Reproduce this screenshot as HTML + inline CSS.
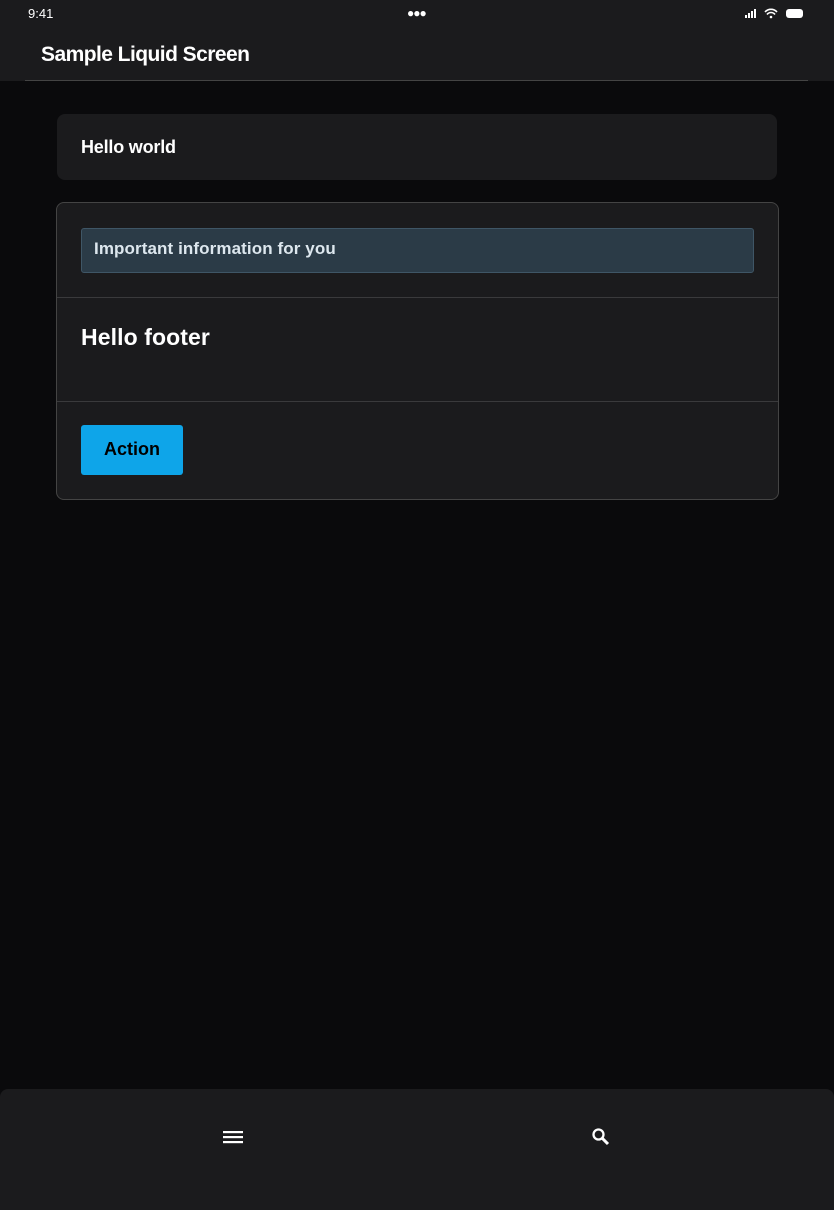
<!DOCTYPE html>
<html><head><style>
*{margin:0;padding:0;box-sizing:border-box}
body{width:834px;height:1210px;background:#0a0a0c;font-family:"Liberation Sans",sans-serif;color:#fff;position:relative;overflow:hidden}
.top{position:absolute;left:0;top:0;width:834px;height:81px;background:#1b1b1d}
.time{position:absolute;left:28px;top:6px;font-size:13px}
.dots{position:absolute;left:407px;top:6px;font-size:12px;letter-spacing:-1px}
.title{position:absolute;left:41px;top:43px;font-size:21px;font-weight:bold;letter-spacing:-0.55px}
.line{position:absolute;left:25px;top:80px;width:783px;height:1px;background:#444}
.c1{position:absolute;left:57px;top:114px;width:720px;height:66px;background:#1b1b1d;border-radius:8px}
.c1 span{position:absolute;left:24px;top:23px;font-size:18px;font-weight:bold;letter-spacing:-0.2px}
.c2{position:absolute;left:56px;top:202px;width:723px;height:298px;background:#1b1b1d;border:1px solid #444;border-radius:8px}
.info{position:absolute;left:24px;top:25px;width:673px;height:45px;background:#2b3b47;border:1px solid #3f5666;border-radius:3px;font-size:17px;font-weight:bold;color:#dde7ee;padding:10px 12px;letter-spacing:0.1px}
.h1{position:absolute;left:0;top:94px;width:721px;height:1px;background:#3a3a3c}
.h2{position:absolute;left:0;top:198px;width:721px;height:1px;background:#3a3a3c}
.foot{position:absolute;left:24px;top:121px;font-size:23px;font-weight:bold;letter-spacing:0.1px}
.btn{position:absolute;left:24px;top:222px;width:102px;height:50px;background:#0ea5e9;border-radius:3px;color:#000;font-size:18px;font-weight:bold;text-align:center;line-height:48px}
.bot{position:absolute;left:0;top:1089px;width:834px;height:121px;background:#1b1b1d;border-radius:8px 8px 0 0}
</style></head><body>
<div class="top"><div class="time">9:41</div><div class="dots">●●●</div>
<svg style="position:absolute;left:745px;top:8px" width="60" height="12"><rect x="0" y="7" width="2" height="3" fill="#fff"/><rect x="3" y="5" width="2" height="5" fill="#fff"/><rect x="6" y="3" width="2" height="7" fill="#fff"/><rect x="9" y="1" width="2" height="9" fill="#fff"/><path d="M20 4a8 8 0 0 1 12 0M22 6.5a5 5 0 0 1 8 0" stroke="#fff" stroke-width="1.6" fill="none"/><circle cx="26" cy="9" r="1.3" fill="#fff"/><rect x="41" y="1" width="17" height="9" rx="3" fill="#fff"/></svg>
<div class="title">Sample Liquid Screen</div></div>
<div class="line"></div>
<div class="c1"><span>Hello world</span></div>
<div class="c2"><div class="info">Important information for you</div><div class="h1"></div><div class="foot">Hello footer</div><div class="h2"></div><div class="btn">Action</div></div>
<div class="bot">
<svg style="position:absolute;left:223px;top:41px" width="20" height="14"><rect x="0" y="1" width="20" height="2.2" fill="#fff"/><rect x="0" y="6" width="20" height="2.2" fill="#fff"/><rect x="0" y="11" width="20" height="2.2" fill="#fff"/></svg>
<svg style="position:absolute;left:591px;top:38px" width="20" height="20"><circle cx="7.5" cy="7.5" r="5" stroke="#fff" stroke-width="2.3" fill="none"/><path d="M11 11l6 6" stroke="#fff" stroke-width="3"/></svg>
</div>
</body></html>
